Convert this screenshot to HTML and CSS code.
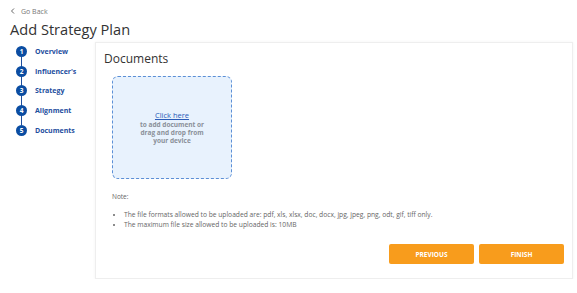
FILE: index.html
```html
<!DOCTYPE html>
<html lang="en">
<head>
    <meta charset="UTF-8">
    <title>Add Strategy Plan</title>
    <link rel="stylesheet" href="styles.css">
</head>
<body>
    <div class="page">
        <a href="#" class="go-back">
            <svg width="6" height="6" viewBox="0 0 6 6"><path d="M4 0.5 L1.5 3 L4 5.5" fill="none" stroke="#666" stroke-width="1"/></svg>
            Go Back
        </a>
        <h1>Add Strategy Plan</h1>
        <div class="layout">
            <ul class="steps">
                <li class="step"><span class="num">1</span>Overview</li>
                <li class="step"><span class="num">2</span>Influencer's</li>
                <li class="step"><span class="num">3</span>Strategy</li>
                <li class="step"><span class="num">4</span>Alignment</li>
                <li class="step"><span class="num">5</span>Documents</li>
            </ul>
            <div class="panel">
                <h2>Documents</h2>
                <div class="dropzone">
                    <a href="#">Click here</a>
                    <span>to add document or<br>drag and drop from<br>your device</span>
                </div>
                <p class="note">Note:</p>
                <ul class="rules">
                    <li>The file formats allowed to be uploaded are: pdf, xls, xlsx, doc, docx, jpg, jpeg, png, odt, gif, tiff only.</li>
                    <li>The maximum file size allowed to be uploaded is: 10MB</li>
                </ul>
                <div class="actions">
                    <button class="btn">PREVIOUS</button>
                    <button class="btn">FINISH</button>
                </div>
            </div>
        </div>
    </div>
</body>
</html>
```

FILE: styles.css
```css
/* page */
body {
    margin: 0;
    font-family: 'Open Sans', sans-serif;
    background-color: #fff;
    color: #333;
}

.page {
    padding: 5px 4px 0 10px;
}

.go-back {
    display: flex;
    align-items: center;
    gap: 5px;
    font-size: 7px;
    color: #777;
    text-decoration: none;
    height: 12px;
}

h1 {
    margin: 1px 0 0;
    font-size: 14.6px;
    font-weight: 400;
    color: #333;
    line-height: 22px;
}

.layout {
    display: flex;
    margin-top: 2px;
}

/* steps */
.steps {
    list-style: none;
    margin: 0;
    padding: 0 0 0 6px;
    width: 79px;
}

.step {
    display: flex;
    align-items: center;
    gap: 8px;
    height: 19.6px;
    font-size: 7px;
    font-weight: 700;
    color: #1d4e9e;
    position: relative;
}

.step + .step::before {
    content: "";
    position: absolute;
    left: 5px;
    top: -5px;
    width: 1px;
    height: 10px;
    background-color: #1d4e9e;
}

.num {
    width: 11px;
    height: 11px;
    border-radius: 50%;
    background-color: #0b4da2;
    color: #fff;
    font-size: 6.5px;
    display: flex;
    align-items: center;
    justify-content: center;
    position: relative;
    z-index: 1;
}

/* panel */
.panel {
    flex: 1;
    height: 237px;
    border: 1px solid #eee;
    box-shadow: 0 0 3px rgba(0, 0, 0, 0.05);
    padding: 8px 8px 0 8px;
    box-sizing: border-box;
}

h2 {
    margin: 0 0 9px;
    font-size: 12px;
    font-weight: 400;
    color: #333;
    line-height: 16px;
}

.dropzone {
    width: 120px;
    height: 103px;
    margin-left: 8px;
    box-sizing: border-box;
    border: 1px dashed #5b8fd6;
    border-radius: 6px;
    background-color: #e8f2fd;
    display: flex;
    flex-direction: column;
    align-items: center;
    justify-content: center;
    text-align: center;
}

.dropzone a {
    color: #2a5cb8;
    font-size: 7.5px;
    line-height: 11px;
}

.dropzone span {
    color: #8a9099;
    font-size: 6.5px;
    font-weight: 700;
    line-height: 8px;
}

.note {
    margin: 13px 0 0 8px;
    font-size: 6.5px;
    color: #666;
}

.rules {
    margin: 9px 0 0;
    padding-left: 20px;
    font-size: 6.7px;
    color: #666;
    line-height: 10px;
}

.rules li {
    height: 10px;
}

.actions {
    display: flex;
    justify-content: flex-end;
    gap: 5px;
    margin-top: 14px;
}

.btn {
    width: 85px;
    height: 20px;
    border: none;
    border-radius: 2px;
    background-color: #f89c1c;
    color: #fff;
    font-family: 'Open Sans', sans-serif;
    font-size: 6.5px;
    font-weight: 700;
    cursor: pointer;
}
```
